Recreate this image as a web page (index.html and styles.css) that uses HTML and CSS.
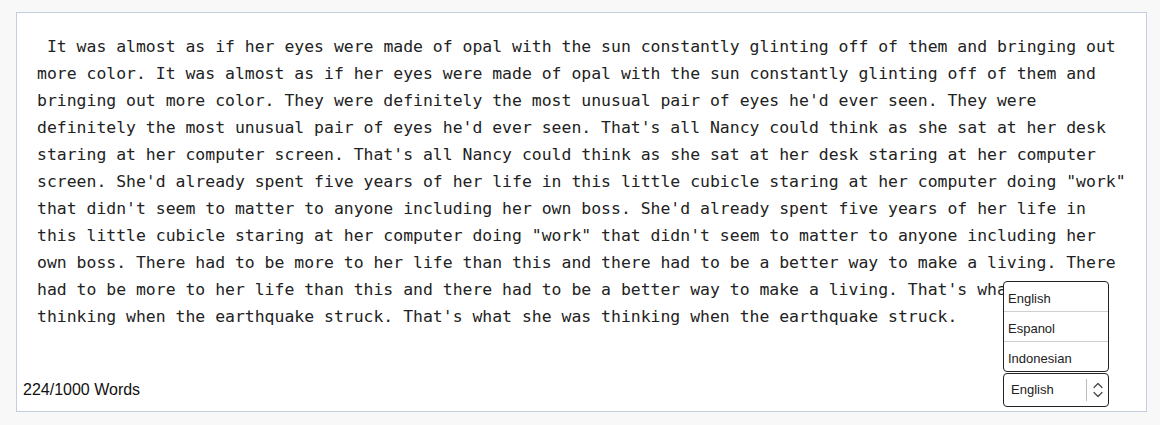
FILE: index.html
```html
<!DOCTYPE html>
<html lang="en">
<head>
<meta charset="utf-8">
<title>Editor</title>
<link rel="stylesheet" href="styles.css">
</head>
<body>
<div class="card">
<div class="text"> It was almost as if her eyes were made of opal with the sun constantly glinting off of them and bringing out more color. It was almost as if her eyes were made of opal with the sun constantly glinting off of them and bringing out more color. They were definitely the most unusual pair of eyes he'd ever seen. They were definitely the most unusual pair of eyes he'd ever seen. That's all Nancy could think as she sat at her desk staring at her computer screen. That's all Nancy could think as she sat at her desk staring at her computer screen. She'd already spent five years of her life in this little cubicle staring at her computer doing "work" that didn't seem to matter to anyone including her own boss. She'd already spent five years of her life in this little cubicle staring at her computer doing "work" that didn't seem to matter to anyone including her own boss. There had to be more to her life than this and there had to be a better way to make a living. There had to be more to her life than this and there had to be a better way to make a living. That's what she was thinking when the earthquake struck. That's what she was thinking when the earthquake struck.</div>
<div class="footer">
<span class="count">224/1000 Words</span>
<div class="select-wrap">
<ul class="menu">
<li class="menu-item">English</li>
<li class="menu-item">Espanol</li>
<li class="menu-item">Indonesian</li>
</ul>
<div class="select">
<span class="select-value">English</span>
<span class="select-sep"></span>
<svg class="chev" width="12" height="20" viewBox="0 0 12 20" fill="none" stroke="#444" stroke-width="1.2" stroke-linecap="round" stroke-linejoin="round"><path d="M2 7.5 L6 3.5 L10 7.5"/><path d="M2 12.5 L6 16.5 L10 12.5"/></svg>
</div>
</div>
</div>
</div>
</body>
</html>
```
FILE: styles.css
```css
html, body {
  margin: 0;
  padding: 0;
}
body {
  background: #f8f8f8;
  padding: 12px 0 0 16px;
  font-family: "Liberation Sans", Arial, sans-serif;
}
.card {
  box-sizing: border-box;
  width: 1131px;
  height: 400px;
  background: #ffffff;
  border: 1px solid #c6cde0;
  display: flex;
  flex-direction: column;
}
.text {
  width: 1094px;
  padding: 20px 0 0 20px;
  font-family: "DejaVu Sans Mono", "Liberation Mono", monospace;
  font-size: 16.45px;
  line-height: 27px;
  color: #222;
  white-space: pre-wrap;
  word-wrap: break-word;
}
.footer {
  margin-top: auto;
  display: flex;
  justify-content: space-between;
  align-items: center;
  padding: 0 37px 4px 6px;
}
.count {
  font-size: 16px;
  color: #111;
}
.select-wrap {
  position: relative;
}
.menu {
  position: absolute;
  left: 0;
  bottom: 100%;
  margin: 0 0 1px 0;
  padding: 0;
  list-style: none;
  box-sizing: border-box;
  width: 106px;
  background: #fff;
  border: 1px solid #222;
  border-radius: 4px;
}
.menu-item {
  box-sizing: border-box;
  height: 30px;
  line-height: 33px;
  padding-left: 4px;
  font-size: 13px;
  color: #222;
  border-top: 1px solid #cfcfcf;
}
.menu-item:first-child {
  border-top: none;
  height: 29px;
  line-height: 34px;
}
.select {
  box-sizing: border-box;
  width: 106px;
  height: 34px;
  border: 1px solid #222;
  border-radius: 4px;
  background: #fff;
  display: flex;
  align-items: center;
  padding: 0 4px 0 7px;
}
.select-value {
  font-size: 13px;
  color: #222;
  flex: 1;
  margin-top: -1px;
}
.select-sep {
  width: 1px;
  height: 22px;
  background: #bbb;
  margin-right: 5px;
}
.chev {
  display: block;
}
```
